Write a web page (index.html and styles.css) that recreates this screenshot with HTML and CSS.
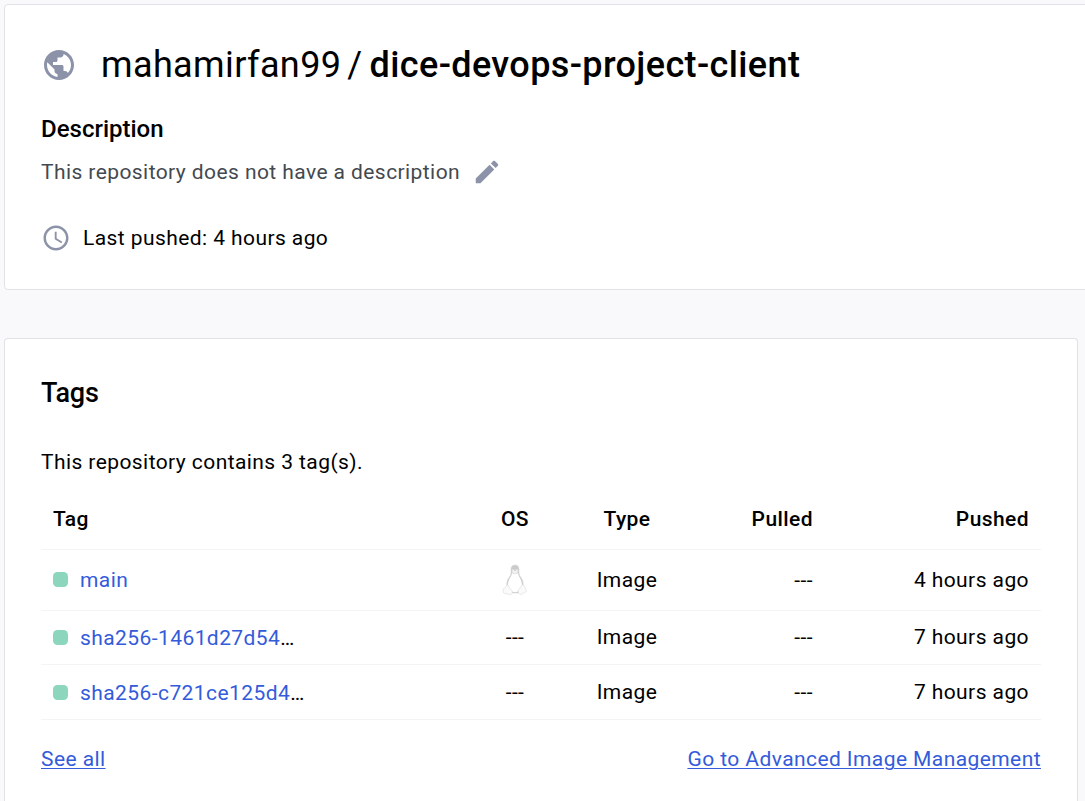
FILE: index.html
```html
<!DOCTYPE html>
<html lang="en">
<head>
<meta charset="utf-8">
<title>mahamirfan99/dice-devops-project-client</title>
<link rel="stylesheet" href="styles.css">
</head>
<body>
<section class="card summary">
  <h1 class="title">
    <svg class="globe" viewBox="0 0 24 24"><path d="M12 2C6.480 2 2 6.480 2 12s4.480 10 10 10 10-4.480 10-10S17.520 2 12 2zm-1 17.930c-3.950-.49-7-3.850-7-7.930 0-.62.08-1.210.21-1.790L9 15v1c0 1.100.9 2 2 2v1.930zm6.900-2.540c-.26-.81-1-1.390-1.900-1.390h-1v-3c0-.55-.45-1-1-1H8v-2h2c.55 0 1-.45 1-1V7h2c1.100 0 2-.9 2-2v-.41c2.930 1.190 5 4.060 5 7.410 0 2.080-.8 3.970-2.100 5.390z"/></svg>
    <span class="owner">mahamirfan99</span><span class="slash">/</span><strong class="repo">dice-devops-project-client</strong>
  </h1>
  <h2 class="label">Description</h2>
  <div class="description">
    <span class="desc-text">This repository does not have a description</span>
    <svg class="pencil" viewBox="0 0 24 24"><path d="M3 17.250V21h3.750L17.810 9.940l-3.750-3.750L3 17.250zM20.710 7.040c.39-.39.39-1.020 0-1.410l-2.340-2.340c-.39-.39-1.020-.39-1.410 0l-1.830 1.830 3.750 3.750 1.830-1.830z"/></svg>
  </div>
  <div class="pushed">
    <svg class="clock" viewBox="0 0 24 24"><path d="M11.990 2C6.470 2 2 6.480 2 12s4.470 10 9.990 10C17.520 22 22 17.520 22 12S17.520 2 11.990 2zM12 20c-4.420 0-8-3.580-8-8s3.580-8 8-8 8 3.580 8 8-3.580 8-8 8zm.5-13H11v6l5.250 3.150.75-1.230-4.500-2.670V7z"/></svg>
    <span class="pushed-text">Last pushed: 4 hours ago</span>
  </div>
</section>
<section class="card tags">
  <h2 class="heading">Tags</h2>
  <p class="count">This repository contains 3 tag(s).</p>
  <div class="table">
    <div class="row head"><span>Tag</span><span class="mid">OS</span><span class="mid">Type</span><span class="end">Pulled</span><span class="end">Pushed</span></div>
    <div class="row first"><span class="tag"><i class="dot"></i><a class="link">main</a></span><span class="mid os"><svg class="tux" viewBox="0 0 26 32"><path class="body" d="M13 1C9.600 1 8.700 3.600 9 6.500c.3 3-.2 4.500-2 7C5 16.500 4.500 19 4.800 22L9 29h8l4.200-7c.3-3-.2-5.500-2.200-8.500-1.800-2.500-2.200-4-2-7C17.300 3.600 16.400 1 13 1z"/><path class="belly" d="M10 9c2 1.500 4 1.500 6 0 .3 3.500 3.600 6 3.900 11 .1 5-2.900 8.200-6.900 8.200S6 25 6 20c.3-5 3.700-7.500 4-11z"/><path class="face" d="M10.300 5.400h2v1.500h1.400V5.400h2v3.200L13 10l-2.700-1.400z"/><path class="foot" d="M5.300 20.500 10 27c1 2-.5 4-3 3.400L2 29.200C.7 28.800 1.600 27 1.300 25.500c-.2-1.400 1.200-1 2-1.700.8-.8.8-2.700 2-3.300zM20.700 20.500 16.500 26c-1 2.500.8 5 3.200 4.300l4.600-2.700c1-.8-.4-1.600-.7-2.800-.3-1.400-1.300-3.700-2.900-4.300z"/></svg></span><span class="mid">Image</span><span class="end">---</span><span class="end">4 hours ago</span></div>
    <div class="row second"><span class="tag"><i class="dot"></i><a class="link">sha256-1461d27d54</a><span class="more">…</span></span><span class="mid">---</span><span class="mid">Image</span><span class="end">---</span><span class="end">7 hours ago</span></div>
    <div class="row third"><span class="tag"><i class="dot"></i><a class="link">sha256-c721ce125d4</a><span class="more">…</span></span><span class="mid">---</span><span class="mid">Image</span><span class="end">---</span><span class="end">7 hours ago</span></div>
  </div>
  <div class="actions"><a class="link underlined">See all</a><a class="link underlined">Go to Advanced Image Management</a></div>
</section>
</body>
</html>
```
FILE: styles.css
```css
* { box-sizing: border-box; }
html { overflow: hidden; }
body {
  display: flex;
  flex-direction: column;
  align-items: flex-start;
  margin: 0;
  padding: 4px 0 0 4px;
  height: 801px;
  overflow: hidden;
  background: #f9f9fb;
  color: #000;
  font: 400 21px/30px Roboto, sans-serif;
  letter-spacing: 0.42px;
}
h1, h2, p { margin: 0; font-weight: 500; }
svg { display: block; flex: none; fill: #8c93a8; }
.card { flex: none; background: #fff; border: 1px solid #e1e2e6; border-radius: 4px; }
.summary { width: 1100px; height: 286px; padding: 36px; }
.title { display: flex; align-items: center; height: 48px; font-size: 36px; font-weight: 400; line-height: 48px; letter-spacing: 0.38px; }
.globe { width: 36px; height: 36px; margin-right: 24px; }
.slash { margin: 0 7px 0 6px; }
.repo { font-weight: 500; }
.label { margin-top: 25px; font-size: 24px; letter-spacing: 0; }
.description { display: flex; align-items: center; margin-top: 13px; color: #444950; }
.pencil { width: 30px; height: 30px; margin-left: 12px; }
.pushed { display: flex; align-items: center; margin-top: 36px; }
.clock { width: 30px; height: 30px; margin-right: 12px; }
.tags { width: 1074px; height: 463px; margin-top: 48px; padding: 36px; border-bottom: 0; border-radius: 4px 4px 0 0; }
.heading { height: 36px; font-size: 27px; line-height: 36px; letter-spacing: -0.2px; }
.count { margin-top: 36px; font-weight: 400; }
.row {
  display: grid;
  grid-template-columns: 406px 112px 112px 130px 1fr;
  align-items: center;
  padding: 0 12px;
  border-bottom: 1px solid #f3f4f6;
}
.head { height: 73px; padding-top: 12px; font-weight: 500; }
.first { height: 61px; }
.second { height: 54px; padding-bottom: 1px; }
.third { height: 55px; }
.mid { text-align: center; }
.end { text-align: right; }
.os { display: flex; justify-content: center; }
.tag { display: flex; align-items: center; }
.second .tag, .third .tag { padding-top: 1px; }
.dot { width: 15px; height: 15px; margin-right: 12px; border-radius: 4.5px; background: #8bd6bc; }
.first .dot { margin-bottom: 1px; }
.link { color: #335bda; }
.underlined { text-decoration: underline; text-decoration-thickness: 1px; text-underline-offset: 2px; }
.tux { width: 26px; height: 32px; }
.tux path { stroke: #dcdcdc; stroke-width: 0.6; }
.tux .body { fill: #cbcbcb; }
.tux .belly { fill: #fff; stroke: none; }
.tux .face { fill: #f2f2f2; stroke: none; }
.tux .foot { fill: #fafafa; }
.actions { display: flex; justify-content: space-between; margin-top: 24px; }
```
